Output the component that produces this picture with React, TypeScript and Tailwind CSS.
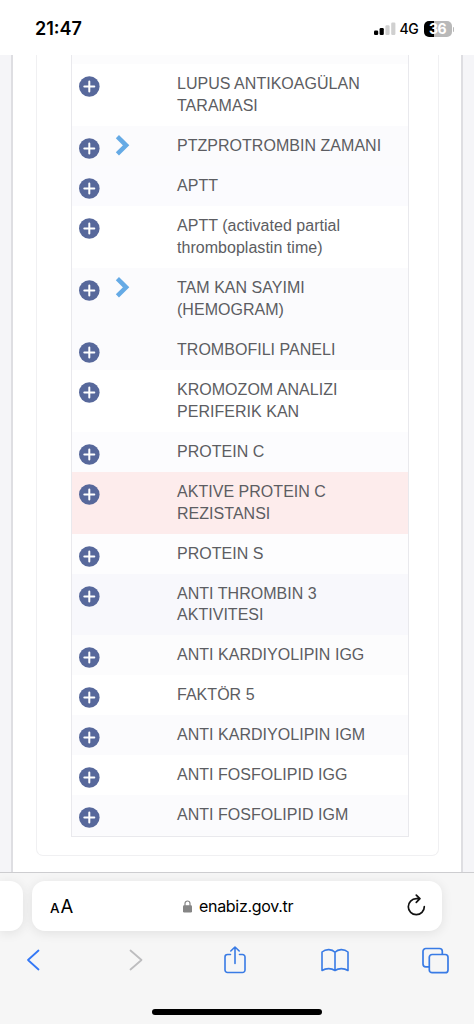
import React from 'react';
import clsx from 'clsx';

interface TestRow {
  lines: string[];
  expandable?: boolean;
  background: string;
}

const rows: TestRow[] = [
  { lines: ['LUPUS ANTIKOAGÜLAN', 'TARAMASI'], background: 'bg-white' },
  { lines: ['PTZPROTROMBIN ZAMANI'], expandable: true, background: 'bg-[#fbfbfd]' },
  { lines: ['APTT'], background: 'bg-[#fbfbfe]' },
  { lines: ['APTT (activated partial', 'thromboplastin time)'], background: 'bg-white' },
  { lines: ['TAM KAN SAYIMI', '(HEMOGRAM)'], expandable: true, background: 'bg-[#fbfbfd]' },
  { lines: ['TROMBOFILI PANELI'], background: 'bg-[#fbfbfd]' },
  { lines: ['KROMOZOM ANALIZI', 'PERIFERIK KAN'], background: 'bg-white' },
  { lines: ['PROTEIN C'], background: 'bg-[#fcfcfe]' },
  { lines: ['AKTIVE PROTEIN C', 'REZISTANSI'], background: 'bg-[#fdecec]' },
  { lines: ['PROTEIN S'], background: 'bg-[#fdfdfe]' },
  { lines: ['ANTI THROMBIN 3', 'AKTIVITESI'], background: 'bg-[#f8f8fc]' },
  { lines: ['ANTI KARDIYOLIPIN IGG'], background: 'bg-[#fcfcfd]' },
  { lines: ['FAKTÖR 5'], background: 'bg-white' },
  { lines: ['ANTI KARDIYOLIPIN IGM'], background: 'bg-[#fbfbfd]' },
  { lines: ['ANTI FOSFOLIPID IGG'], background: 'bg-white' },
  { lines: ['ANTI FOSFOLIPID IGM'], background: 'bg-[#fbfbfd]' },
];

const StatusBar: React.FC = () => (
  <header className="flex h-[55px] shrink-0 items-start justify-between bg-white pl-[35px] pr-[20px] pt-[17px] font-['Inter',sans-serif]">
    <span className="text-[18px] font-semibold leading-6 text-black">21:47</span>
    <div className="flex h-6 items-center">
      <svg className="h-[14px] w-[22px]" viewBox="0 0 22 14">
        <rect x="0" y="8.5" width="4.2" height="4.5" rx="1.2" />
        <rect x="5.6" y="6" width="4.2" height="7" rx="1.2" />
        <rect x="11.4" y="3.3" width="4.2" height="9.7" rx="1.2" fill="#d0d0d0" />
        <rect x="17.2" y="0.5" width="4.2" height="12.5" rx="1.2" fill="#d0d0d0" />
      </svg>
      <span className="ml-1 w-[19px] whitespace-nowrap text-[14px] font-medium leading-6 tracking-[-0.4px] text-black">4G</span>
      <div className="ml-[5px] flex h-4 w-7 items-center justify-center rounded-[5px] bg-[linear-gradient(90deg,#000_36%,#b9b9b9_36%)] text-[14px] font-bold leading-4 tracking-[-0.5px] text-white">
        36
      </div>
      <div className="ml-px h-[5px] w-[1.5px] rounded-r bg-[#b9b9b9]" />
    </div>
  </header>
);

const ResultRow: React.FC<{ row: TestRow }> = ({ row }) => (
  <li
    className={clsx(
      'flex shrink-0 items-start pl-[7px]',
      row.lines.length > 1 ? 'h-[61.85px]' : 'h-10',
      row.background
    )}
  >
    <svg className="mt-[12px] h-[21px] w-[21px] shrink-0" viewBox="0 0 21 21" fill="none">
      <circle cx="10.3" cy="10.5" r="10.3" fill="#57689b" />
      <path d="M10.3 5.5v10M5.3 10.5h10" stroke="#fff" strokeWidth="2" strokeLinecap="round" />
    </svg>
    <div className="ml-[15px] mt-[8px] w-[62px] shrink-0">
      {row.expandable && (
        <svg className="h-[23px] w-[15px]" viewBox="0 0 15 23" fill="none">
          <path d="M2.4 2.7l8.7 8.6-8.7 8.6" stroke="#65aae5" strokeWidth="4.5" />
        </svg>
      )}
    </div>
    <div className="pt-[9px] text-[16px] leading-[21.8px] tracking-[0.03px] text-[#5c5d62]">
      {row.lines.map(line => (
        <p key={line} className="whitespace-nowrap">{line}</p>
      ))}
    </div>
  </li>
);

const BrowserBar: React.FC = () => (
  <footer className="h-[152px] shrink-0 overflow-hidden border-t border-[#cdcdd0] bg-[#f6f6f6] font-['Inter',sans-serif]">
    <div className="flex h-[59px] items-start gap-[9px] pt-2">
      <div className="h-[50px] w-[23px] shrink-0 rounded-r-[13px] bg-white shadow-[0_2px_12px_rgba(0,0,0,0.09)]" />
      <div className="flex h-[50px] w-[410px] shrink-0 items-center rounded-[13px] bg-white pl-[18px] pr-[16px] shadow-[0_2px_12px_rgba(0,0,0,0.09)]">
        <div className="flex w-[133px] items-baseline pt-[2px] text-black">
          <span className="text-[13.5px] font-medium">A</span>
          <span className="ml-px text-[18.5px]">A</span>
        </div>
        <svg className="h-[13px] w-[9px]" viewBox="0 0 9 13" fill="none">
          <path d="M2 6V3.5a2.5 2.5 0 015 0V6" stroke="#858585" strokeWidth="1.2" />
          <rect y="5.3" width="9" height="7.2" rx="1.2" fill="#858585" />
        </svg>
        <span className="ml-[7px] text-[16px] leading-6 tracking-[-0.3px] text-black">enabiz.gov.tr</span>
        <svg className="ml-auto h-[24px] w-[19px]" viewBox="0 0 19 24" fill="none" stroke="#111" strokeWidth="1.7" strokeLinecap="round" strokeLinejoin="round">
          <path d="M17.3 12.7a8 8 0 11-8-8h3.4M9.3 1.2l3.6 3.5-3.6 3.6" />
        </svg>
      </div>
    </div>
    <nav className="-ml-[17px] grid h-[56px] w-[503px] grid-cols-5 place-items-center text-[#397be5]">
      <svg className="h-[22px] w-[14px]" viewBox="0 0 14 22" fill="none" stroke="#3478f6" strokeWidth="1.8" strokeLinecap="round" strokeLinejoin="round">
        <path d="M12.5 1.5L2 11l10.5 9.5" />
      </svg>
      <svg className="ml-[4px] h-[22px] w-[14px]" viewBox="0 0 14 22" fill="none" stroke="#bdbdbf" strokeWidth="1.8" strokeLinecap="round" strokeLinejoin="round">
        <path d="M1.5 1.5L12.5 11l-11 9.5" />
      </svg>
      <svg className="ml-px h-7 w-[22px]" viewBox="0 0 22 28" fill="none" stroke="currentColor" strokeWidth="1.6" strokeLinecap="round" strokeLinejoin="round">
        <path d="M6.5 8.5h-3A2.5 2.5 0 001 11v13a2.5 2.5 0 002.5 2.5h15A2.5 2.5 0 0021 24V11a2.500 2.500 0 00-2.500-2.500h-3M11 17.500V1M6.800 5L11 1l4.200 4" />
      </svg>
      <svg className="h-6 w-7" viewBox="0 0 28 24" fill="none" stroke="currentColor" strokeWidth="1.6" strokeLinejoin="round">
        <path d="M14 4.2C11 1 5 .6 1 4v18.500c4-2.500 9.500-2.400 13 0 3.500-2.400 9-2.500 13 0V4C23 .6 17 1 14 4.200zM14 4.200v18.300" />
      </svg>
      <svg className="h-[27px] w-[27px]" viewBox="0 0 27 27" fill="none" stroke="currentColor" strokeWidth="1.7" strokeLinejoin="round">
        <rect x="7.3" y="7.5" width="18.7" height="18.2" rx="2.8" />
        <path d="M7.3 19.8H3.8A2.8 2.8 0 011 17V4.300a2.800 2.800 0 012.800-2.800h13.700a2.800 2.800 0 012.800 2.800v3.200" />
      </svg>
    </nav>
    <div className="mx-auto mt-[21px] h-[6px] w-[170px] rounded-full bg-black" />
  </footer>
);

const App: React.FC = () => {
  return (
    <div className="flex h-[1024px] w-[474px] flex-col overflow-hidden bg-white font-['Liberation_Sans',sans-serif]">
      <StatusBar />
      <main className="flex h-[817px] shrink-0 bg-[#f5f5f8] pl-[11px] pr-[11px]">
        <div className="w-[452px] border-l-2 border-r-2 border-[#dedee2] bg-white pl-[23px]">
          <section className="h-[801px] w-[403px] rounded-b-[7px] border-x border-b border-[#f0f0f2] pl-[34px]">
            <ul className="flex h-[782px] w-[338px] flex-col border-x border-b border-[#e9e9ed] bg-[#fcfcfd] pt-[9.4px]">
              {rows.map(row => (
                <ResultRow key={row.lines[0]} row={row} />
              ))}
            </ul>
          </section>
        </div>
      </main>
      <BrowserBar />
    </div>
  );
};

export default App;
